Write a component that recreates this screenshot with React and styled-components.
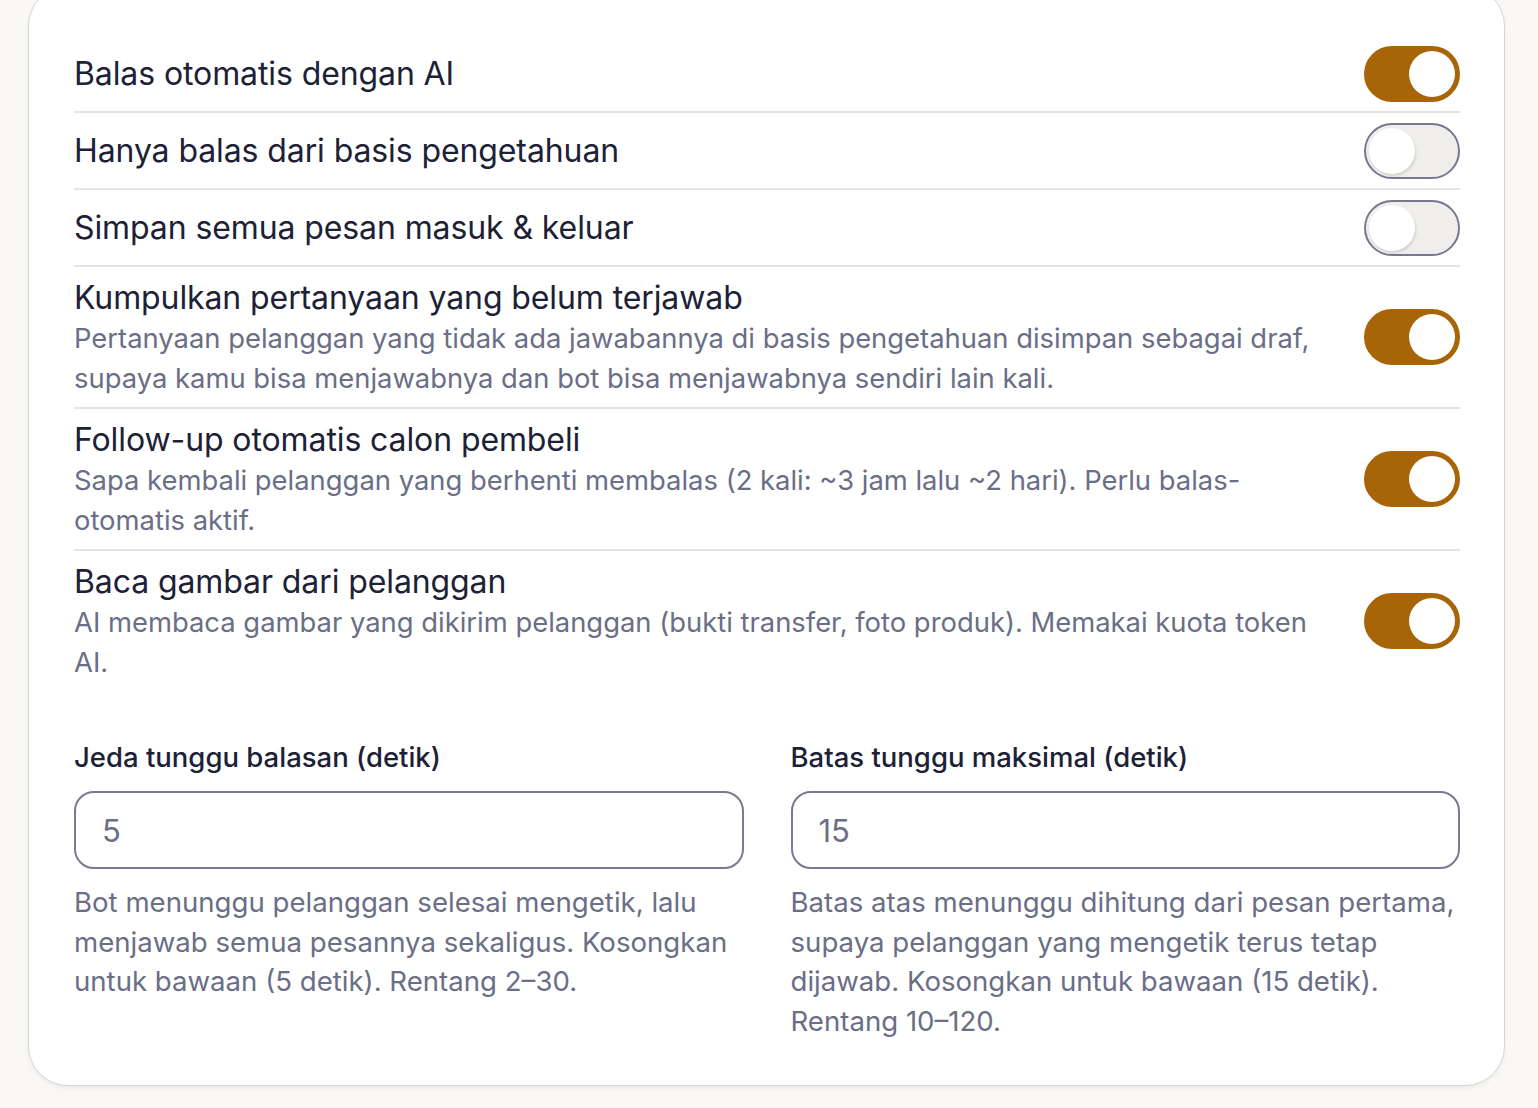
import React, { useState } from 'react';
import styled, { createGlobalStyle } from 'styled-components';

const GlobalStyle = createGlobalStyle`
  html, body {
    margin: 0;
    padding: 0;
    background: #f9f8f6;
    font-family: Inter, "Noto Sans", sans-serif;
  }
`;

const Page = styled.div`
  padding: 0 33px 24px 28px;
`;

const Card = styled.section`
  margin-top: -14px;
  background: #fff;
  border: 1.5px solid #d7d6d3;
  border-radius: 40px;
  box-shadow: 0 2px 4px rgba(0, 0, 0, 0.06);
  padding: 49px 44px 44px 45px;
`;

const List = styled.div`
  display: flex;
  flex-direction: column;
`;

const Row = styled.div`
  display: flex;
  align-items: center;
  justify-content: space-between;
  gap: 40px;
  padding: 9.5px 0;
  border-bottom: 2px solid ${(p) => (p.$last ? 'transparent' : '#e6e5e1')};
`;

const Text = styled.div`
  display: flex;
  flex-direction: column;
  min-width: 0;
`;

const Title = styled.div`
  font-size: 32px;
  line-height: 41px;
  letter-spacing: -0.1px;
  color: #1d2136;
`;

const Desc = styled.div`
  font-size: 27.4px;
  line-height: 40px;
  color: #6a6e86;
`;

const Switch = styled.button`
  flex-shrink: 0;
  position: relative;
  width: 96px;
  height: 56px;
  border-radius: 28px;
  border: 2px solid ${(p) => (p.$on ? '#a86508' : '#767990')};
  background: ${(p) => (p.$on ? '#a86508' : '#efeeeb')};
  padding: 0;
  cursor: pointer;
`;

const Knob = styled.span`
  position: absolute;
  top: 3px;
  left: ${(p) => (p.$on ? '43px' : '3px')};
  width: 46px;
  height: 46px;
  border-radius: 50%;
  background: #fff;
  box-shadow: ${(p) => (p.$on ? 'none' : '1px 2px 3px rgba(0, 0, 0, 0.12)')};
`;

const Fields = styled.div`
  display: grid;
  grid-template-columns: 1fr 1fr;
  column-gap: 47px;
  margin-top: 44px;
`;

const Field = styled.div`
  display: flex;
  flex-direction: column;
`;

const Label = styled.label`
  font-size: 27.5px;
  line-height: 40px;
  font-weight: 500;
  color: #1d2136;
  margin-bottom: 14px;
`;

const Input = styled.input`
  box-sizing: border-box;
  height: 78px;
  width: 100%;
  border: 2px solid #777a90;
  border-radius: 20px;
  padding: 0 26px;
  font-family: inherit;
  font-size: 31px;
  color: #6a6e86;
  background: #fff;
  outline: none;
`;

const Help = styled.div`
  margin-top: 14px;
  font-size: 27.6px;
  line-height: 39.5px;
  color: #6a6e86;
`;

const settings = [
  { title: 'Balas otomatis dengan AI', on: true },
  { title: 'Hanya balas dari basis pengetahuan', on: false },
  { title: 'Simpan semua pesan masuk & keluar', on: false },
  {
    title: 'Kumpulkan pertanyaan yang belum terjawab',
    desc: 'Pertanyaan pelanggan yang tidak ada jawabannya di basis pengetahuan disimpan sebagai draf, supaya kamu bisa menjawabnya dan bot bisa menjawabnya sendiri lain kali.',
    on: true,
  },
  {
    title: 'Follow-up otomatis calon pembeli',
    desc: 'Sapa kembali pelanggan yang berhenti membalas (2 kali: ~3 jam lalu ~2 hari). Perlu balas-otomatis aktif.',
    on: true,
  },
  {
    title: 'Baca gambar dari pelanggan',
    desc: 'AI membaca gambar yang dikirim pelanggan (bukti transfer, foto produk). Memakai kuota token AI.',
    on: true,
  },
];

const App = () => {
  const [state, setState] = useState(settings.map((s) => s.on));

  const flip = (i) => setState((prev) => prev.map((v, j) => (j === i ? !v : v)));

  return (
    <Page>
      <GlobalStyle />
      <Card>
        <List>
          {settings.map((s, i) => (
            <Row key={s.title} $last={i === settings.length - 1}>
              <Text>
                <Title>{s.title}</Title>
                {s.desc && <Desc>{s.desc}</Desc>}
              </Text>
              <Switch $on={state[i]} onClick={() => flip(i)} aria-pressed={state[i]}>
                <Knob $on={state[i]} />
              </Switch>
            </Row>
          ))}
        </List>
        <Fields>
          <Field>
            <Label>Jeda tunggu balasan (detik)</Label>
            <Input defaultValue="5" />
            <Help>
              Bot menunggu pelanggan selesai mengetik, lalu menjawab semua pesannya sekaligus.
              Kosongkan untuk bawaan (5 detik). Rentang 2–30.
            </Help>
          </Field>
          <Field>
            <Label>Batas tunggu maksimal (detik)</Label>
            <Input defaultValue="15" />
            <Help>
              Batas atas menunggu dihitung dari pesan pertama, supaya pelanggan yang mengetik terus
              tetap dijawab. Kosongkan untuk bawaan (15 detik). Rentang 10–120.
            </Help>
          </Field>
        </Fields>
      </Card>
    </Page>
  );
};

export default App;
